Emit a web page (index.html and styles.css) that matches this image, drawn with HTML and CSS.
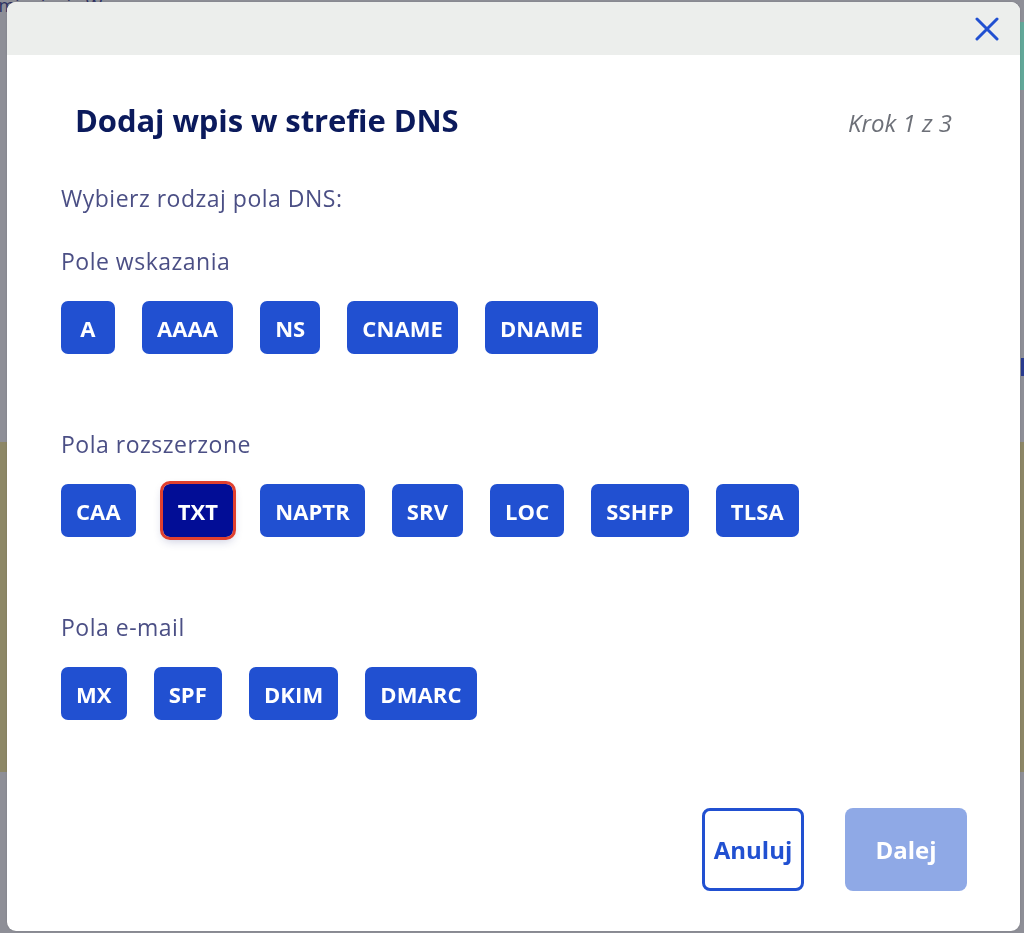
FILE: index.html
```html
<!DOCTYPE html>
<html lang="pl">
<head>
<meta charset="utf-8">
<title>Dodaj wpis w strefie DNS</title>
<link rel="stylesheet" href="styles.css">
</head>
<body>
<div class="page">
  <div class="page-top">
    <div class="page-left">
      <span class="bg-text">zmienienie W</span>
      <span class="bg-big">S</span>
    </div>
    <div class="page-right">
      <span class="teal"></span>
      <span class="navy-mark"></span>
    </div>
  </div>
  <div class="band"></div>
</div>

<div class="overlay">
  <div class="modal" role="dialog" aria-labelledby="dlg-title">
    <div class="modal-head">
      <button class="close" aria-label="Zamknij">
        <svg width="24" height="24" viewBox="0 0 24 24" aria-hidden="true">
          <path d="M2 2 L22 22 M22 2 L2 22" stroke="#2150d1" stroke-width="3" stroke-linecap="round" fill="none"/>
        </svg>
      </button>
    </div>
    <div class="modal-body">
      <div class="title-row">
        <h2 id="dlg-title" class="title">Dodaj wpis w strefie DNS</h2>
        <span class="step">Krok 1 z 3</span>
      </div>
      <p class="intro">Wybierz rodzaj pola DNS:</p>

      <section class="group">
        <h3 class="group-label">Pole wskazania</h3>
        <div class="chips">
          <button class="chip">A</button>
          <button class="chip">AAAA</button>
          <button class="chip">NS</button>
          <button class="chip">CNAME</button>
          <button class="chip">DNAME</button>
        </div>
      </section>

      <section class="group">
        <h3 class="group-label">Pola rozszerzone</h3>
        <div class="chips">
          <button class="chip">CAA</button>
          <button class="chip chip-active">TXT</button>
          <button class="chip">NAPTR</button>
          <button class="chip">SRV</button>
          <button class="chip">LOC</button>
          <button class="chip">SSHFP</button>
          <button class="chip">TLSA</button>
        </div>
      </section>

      <section class="group">
        <h3 class="group-label">Pola e-mail</h3>
        <div class="chips">
          <button class="chip">MX</button>
          <button class="chip">SPF</button>
          <button class="chip">DKIM</button>
          <button class="chip">DMARC</button>
        </div>
      </section>

      <div class="footer">
        <button class="btn btn-outline">Anuluj</button>
        <button class="btn btn-disabled">Dalej</button>
      </div>
    </div>
  </div>
</div>
</body>
</html>
```
FILE: styles.css
```css
* { box-sizing: border-box; }

html, body {
  margin: 0;
  padding: 0;
}

body {
  background: #8e8f97;
  font-family: "Open Sans", "Liberation Sans", sans-serif;
  overflow: hidden;
}

/* underlying (dimmed) page */
.page {
  width: 1024px;
  height: 933px;
}

.page-top {
  height: 442px;
  display: flex;
  justify-content: space-between;
}

.page-left {
  display: flex;
  flex-direction: column;
}

.bg-text {
  font-size: 18px;
  line-height: 10px;
  color: #2d3262;
  margin-left: -10px;
}

.bg-big {
  font-size: 32px;
  line-height: 26px;
  font-weight: 700;
  color: #1e2a66;
  margin-top: 52px;
  margin-left: -17px;
}

.page-right {
  display: flex;
  flex-direction: column;
  align-items: flex-end;
}

.teal {
  display: block;
  width: 4px;
  height: 68px;
  margin-top: 22px;
  background: #62a899;
}

.navy-mark {
  display: block;
  width: 3px;
  height: 18px;
  margin-top: 268px;
  background: #283a8e;
}

.band {
  height: 330px;
  background: #8d8766;
}

/* modal */
.overlay {
  position: fixed;
  inset: 0;
  padding: 2px 4px 2px 7px;
  display: flex;
}

.modal {
  flex: 1;
  background: #ffffff;
  border-radius: 9px;
  overflow: hidden;
  display: flex;
  flex-direction: column;
  box-shadow: 0 0 2px rgba(0, 0, 0, 0.15);
}

.modal-head {
  height: 53px;
  background: #eceeec;
  display: flex;
  justify-content: flex-end;
  align-items: flex-start;
  padding: 15px 21px 0 0;
  flex: none;
}

.close {
  width: 24px;
  height: 24px;
  padding: 0;
  border: 0;
  background: transparent;
  display: flex;
}

.modal-body {
  flex: 1;
  display: flex;
  flex-direction: column;
  padding: 47px 53px 40px 54px;
}

.title-row {
  display: flex;
  justify-content: space-between;
  align-items: baseline;
  padding: 0 15px 0 14px;
}

.title {
  margin: 0;
  font-size: 31px;
  line-height: 36px;
  font-weight: 700;
  color: #0b1a5c;
  letter-spacing: -0.1px;
}

.step {
  font-size: 24px;
  font-style: italic;
  color: #6d7078;
}

.intro {
  margin: 46px 0 0;
  font-size: 23px;
  line-height: 26px;
  letter-spacing: 0.5px;
  color: #4b4f85;
}

.group {
  margin-top: 37px;
}

.group + .group {
  margin-top: 77px;
}

.group-label {
  margin: 0;
  font-size: 23px;
  line-height: 26px;
  letter-spacing: 0.5px;
  font-weight: 400;
  color: #4b4f85;
}

.chips {
  margin-top: 27px;
  display: flex;
  gap: 27px;
}

.chip {
  height: 53px;
  min-width: 54px;
  padding: 0 15px;
  border: 0;
  border-radius: 7px;
  background: #2150d1;
  color: #ffffff;
  font-family: inherit;
  font-size: 22px;
  font-weight: 700;
  letter-spacing: 0.1px;
}

.chip-active {
  background: #020d96;
  outline: 3px solid #e1402e;
  box-shadow: 0 4px 10px rgba(30, 40, 120, 0.25);
}

.footer {
  margin-top: auto;
  display: flex;
  justify-content: flex-end;
  gap: 41px;
}

.btn {
  height: 83px;
  border-radius: 8px;
  font-family: inherit;
  font-size: 24px;
  font-weight: 700;
  padding: 0;
}

.btn-outline {
  width: 102px;
  border: 3px solid #2150d1;
  background: #ffffff;
  color: #2150d1;
}

.btn-disabled {
  width: 122px;
  border: 0;
  background: #8fa9e6;
  color: #ffffff;
}
```
